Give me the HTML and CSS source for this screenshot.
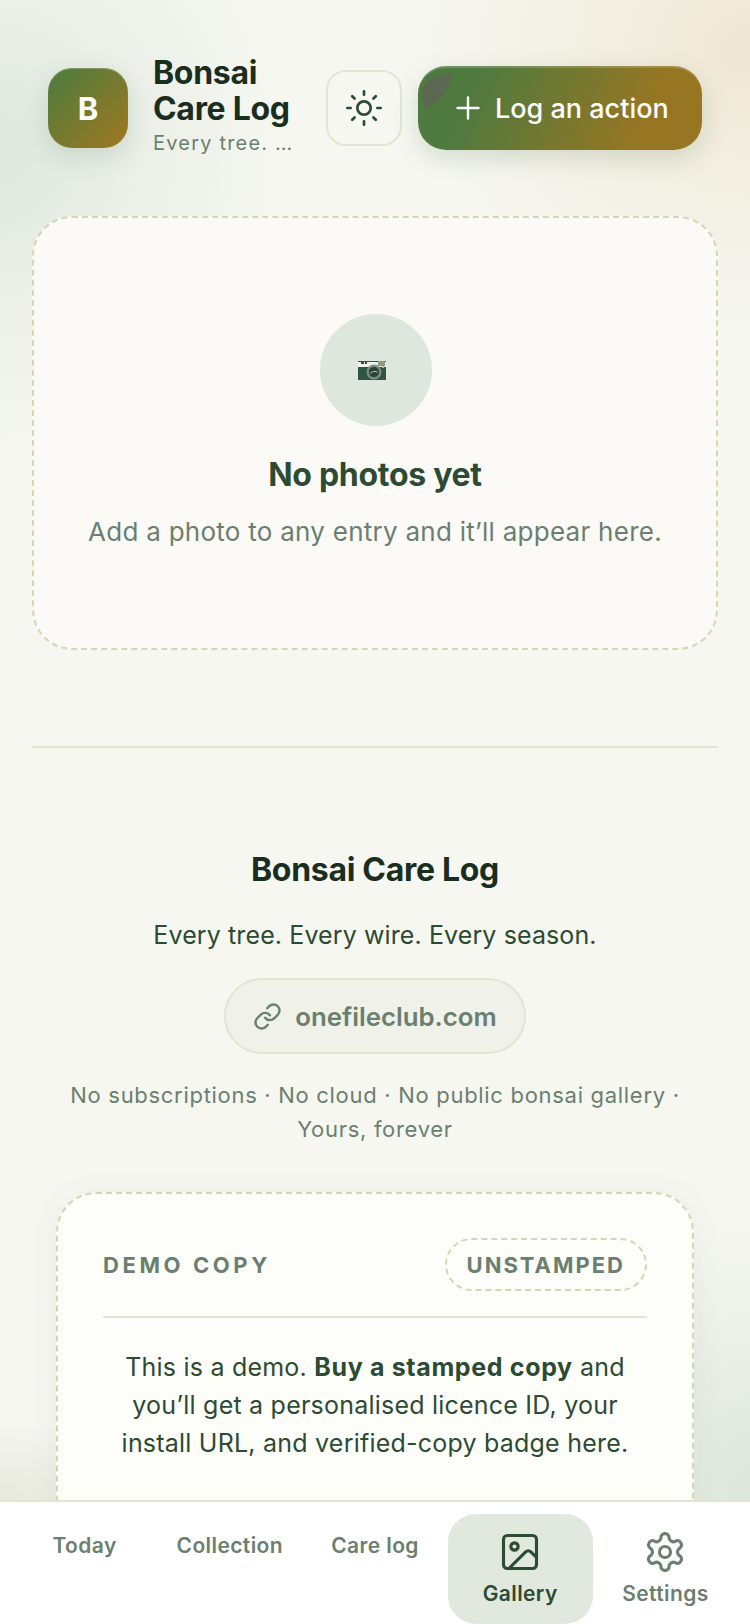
FILE: index.html
```html
<!DOCTYPE html>
<html lang="en">
<head>
  <meta charset="UTF-8" />
  <meta name="viewport" content="width=device-width, initial-scale=1.0" />
  <title>Bonsai Care Log</title>
  <link rel="stylesheet" href="styles.css">
</head>
<body>
  <main class="page">
    <header class="topbar">
      <div class="logo">B</div>
      <div class="brand">
        <h1 class="brand-name">Bonsai Care Log</h1>
        <p class="brand-tag">Every tree. Every wire. Every season.</p>
      </div>
      <button class="theme-btn" aria-label="Theme">
        <svg class="icon-sun" viewBox="0 0 24 24">
          <circle cx="12" cy="12" r="4"/>
          <path d="M12 2v2M12 20v2M4.93 4.93l1.41 1.41M17.66 17.66l1.41 1.41M2 12h2M20 12h2M6.34 17.66l-1.41 1.41M19.07 4.93l-1.41 1.41"/>
        </svg>
      </button>
      <button class="log-btn">
        <svg class="leaf" viewBox="0 0 32 36">
          <path d="M31 1C28 12 22 24 13 30C10 32 7 35 3 36C1 30 0 24 1 17C3 8 12 1 31 1Z"/>
        </svg>
        <svg class="icon-plus" viewBox="0 0 24 24"><path d="M5 12h14M12 5v14"/></svg>
        <span>Log an action</span>
      </button>
    </header>

    <section class="empty-card">
      <div class="empty-circle">
        <svg class="camera" viewBox="0 0 28 19">
          <rect x="0" y="0" width="28" height="19" fill="#2f5544"/>
          <rect x="0" y="1" width="28" height="5" fill="#eef1ec"/>
          <rect x="3" y="1" width="3" height="2" fill="#39453c"/>
          <rect x="7" y="1" width="2" height="2" fill="#39453c"/>
          <rect x="20" y="0" width="7" height="5" fill="#8c9a8e"/>
          <circle cx="16" cy="11" r="7.5" fill="#7b9185"/>
          <circle cx="16" cy="11" r="5.2" fill="#2c4436"/>
          <path d="M12.5 12c2-2 5-2 7-1" stroke="#a8b8ac" fill="none"/>
          <rect x="24" y="5" width="2" height="2" fill="#c9b765"/>
        </svg>
      </div>
      <h2 class="empty-title">No photos yet</h2>
      <p class="empty-text">Add a photo to any entry and it’ll appear here.</p>
    </section>

    <hr class="rule">

    <section class="about">
      <h3 class="about-name">Bonsai Care Log</h3>
      <p class="about-tag">Every tree. Every wire. Every season.</p>
      <a class="site-pill">
        <svg class="icon-link" viewBox="0 0 24 24">
          <path d="M10 13a5 5 0 0 0 7.54.54l3-3a5 5 0 0 0-7.07-7.07l-1.72 1.71"/>
          <path d="M14 11a5 5 0 0 0-7.54-.54l-3 3a5 5 0 0 0 7.07 7.07l1.71-1.71"/>
        </svg>
        onefileclub.com
      </a>
      <p class="about-note">No subscriptions · No cloud · No public bonsai gallery · Yours, forever</p>
    </section>

    <section class="demo-card">
      <div class="demo-head">
        <span class="demo-label">DEMO COPY</span>
        <span class="demo-badge">UNSTAMPED</span>
      </div>
      <p class="demo-text">This is a demo. <strong>Buy a stamped copy</strong> and you’ll get a personalised licence ID, your install URL, and verified-copy badge here.</p>
    </section>
  </main>

  <nav class="tabbar">
    <a class="tab">Today</a>
    <a class="tab">Collection</a>
    <a class="tab">Care log</a>
    <a class="tab tab-active">
      <svg class="tab-icon" viewBox="0 0 24 24">
        <rect x="3" y="3" width="18" height="18" rx="2"/>
        <circle cx="9" cy="9" r="2"/>
        <path d="M21 15l-3.086-3.086a2 2 0 0 0-2.828 0L6 21"/>
      </svg>
      Gallery
    </a>
    <a class="tab">
      <svg class="tab-icon" viewBox="0 0 24 24">
        <path d="M12.22 2h-.44a2 2 0 0 0-2 2v.18a2 2 0 0 1-1 1.73l-.43.25a2 2 0 0 1-2 0l-.15-.08a2 2 0 0 0-2.73.73l-.22.38a2 2 0 0 0 .73 2.73l.15.1a2 2 0 0 1 1 1.72v.51a2 2 0 0 1-1 1.74l-.15.09a2 2 0 0 0-.73 2.73l.22.38a2 2 0 0 0 2.73.73l.15-.08a2 2 0 0 1 2 0l.43.25a2 2 0 0 1 1 1.73V20a2 2 0 0 0 2 2h.44a2 2 0 0 0 2-2v-.18a2 2 0 0 1 1-1.73l.43-.25a2 2 0 0 1 2 0l.15.08a2 2 0 0 0 2.73-.73l.22-.39a2 2 0 0 0-.73-2.73l-.15-.08a2 2 0 0 1-1-1.74v-.5a2 2 0 0 1 1-1.74l.15-.09a2 2 0 0 0 .73-2.73l-.22-.38a2 2 0 0 0-2.73-.73l-.15.08a2 2 0 0 1-2 0l-.43-.25a2 2 0 0 1-1-1.73V4a2 2 0 0 0-2-2z"/>
        <circle cx="12" cy="12" r="3"/>
      </svg>
      Settings
    </a>
  </nav>
</body>
</html>
```

FILE: styles.css
```css
* {
  box-sizing: border-box;
}

html, body {
  height: 100%;
}

body {
  margin: 0;
  height: 100vh;
  display: flex;
  flex-direction: column;
  overflow: hidden;
  font-family: Inter, "Noto Sans", sans-serif;
  color: #2d4a32;
  background-color: #f6f7f1;
  background-image:
    radial-gradient(ellipse 280px 300px at 0 150px, #dfe8de, rgba(223, 232, 222, 0)),
    radial-gradient(ellipse 330px 280px at 750px 50px, #efe7d5, rgba(239, 231, 213, 0)),
    radial-gradient(ellipse 190px 280px at 750px 1500px, #dce6da, rgba(220, 230, 218, 0)),
    radial-gradient(ellipse 140px 90px at 0 1510px, #e4e7d9, rgba(228, 231, 217, 0));
}

svg {
  display: block;
  fill: none;
  stroke: currentColor;
  stroke-linecap: round;
  stroke-linejoin: round;
}

.page {
  flex: 1;
  min-height: 0;
  overflow: hidden;
  padding: 55px 32px 0;
}

/* header */
.topbar {
  display: flex;
  align-items: center;
  gap: 16px;
  padding: 0 16px;
  height: 106px;
}

.logo {
  flex: none;
  width: 80px;
  height: 80px;
  margin-right: 9px;
  border-radius: 24px;
  display: flex;
  align-items: center;
  justify-content: center;
  color: #fff;
  font-size: 31px;
  font-weight: 700;
  background: linear-gradient(135deg, #4a7c3f, #a07820);
  box-shadow: 0 8px 24px rgba(74, 110, 70, 0.18), inset 0 1px 1px rgba(255, 255, 255, 0.25);
}

.brand {
  flex: 1;
  min-width: 0;
  margin-top: -5px;
  padding-right: 16px;
}

.brand-name {
  margin: 0;
  font-size: 32px;
  line-height: 36px;
  font-weight: 700;
  letter-spacing: -0.3px;
  color: #1a2e1f;
}

.brand-tag {
  margin: 3px 0 0;
  font-size: 20px;
  line-height: 26px;
  letter-spacing: 1.2px;
  color: #6b7f6e;
  white-space: nowrap;
  overflow: hidden;
  text-overflow: ellipsis;
}

.theme-btn {
  flex: none;
  width: 76px;
  height: 76px;
  padding: 0;
  display: flex;
  align-items: center;
  justify-content: center;
  color: #2d4a32;
  background: transparent;
  border: 2px solid #e2e5cf;
  border-radius: 20px;
}

.icon-sun {
  width: 40px;
  height: 40px;
  stroke-width: 1.6;
}

.log-btn {
  position: relative;
  flex: none;
  width: 284px;
  height: 84px;
  display: flex;
  align-items: center;
  gap: 15px;
  padding: 0 0 0 38px;
  overflow: hidden;
  color: #fff;
  font: 500 27px Inter, sans-serif;
  background: linear-gradient(115deg, #4f7a3f 20%, #967622 78%);
  border: 0;
  border-radius: 28px;
  box-shadow: 0 8px 24px rgba(74, 110, 70, 0.2), inset 0 3px 1px -1px rgba(255, 255, 255, 0.18);
}

.leaf {
  position: absolute;
  left: 4px;
  top: 7px;
  width: 32px;
  height: 36px;
  stroke: none;
  fill: #5c6852;
}

.icon-plus {
  flex: none;
  width: 36px;
  height: 36px;
  margin: 0 -6px;
  stroke-width: 1.6;
}

/* empty state */
.empty-card {
  margin-top: 55px;
  height: 434px;
  padding-top: 96px;
  text-align: center;
  background-color: #fbfaf7;
  border: 2px dashed #d2d8b2;
  border-radius: 40px;
}

.empty-circle {
  width: 112px;
  height: 112px;
  margin-left: 286px;
  display: flex;
  align-items: center;
  justify-content: center;
  background-color: #dde7dd;
  border-radius: 50%;
}

.camera {
  width: 28px;
  height: 19px;
  margin-right: 9px;
  stroke: none;
}

.empty-title {
  margin: 28px 0 0;
  font-size: 32px;
  line-height: 42px;
  font-weight: 700;
  letter-spacing: -0.3px;
  color: #2d4a32;
}

.empty-text {
  margin: 18px 0 0;
  font-size: 26px;
  line-height: 36px;
  letter-spacing: 0.26px;
  color: #6b7f6e;
}

.rule {
  margin: 96px 0 0;
  height: 2px;
  border: 0;
  background-color: #e2e5cf;
}

/* about */
.about {
  text-align: center;
}

.about-name {
  margin: 102px 0 0;
  font-size: 32px;
  line-height: 40px;
  font-weight: 700;
  letter-spacing: -0.3px;
  color: #1a2e1f;
}

.about-tag {
  margin: 27px 0 0;
  font-size: 25px;
  line-height: 36px;
  letter-spacing: 0.11px;
}

.site-pill {
  width: 302px;
  height: 76px;
  margin: 25px auto 0;
  display: flex;
  align-items: center;
  justify-content: center;
  gap: 13px;
  font-size: 25.8px;
  font-weight: 600;
  color: #6b7f6e;
  background-color: #f0f1e9;
  border: 2px solid #e2e5cf;
  border-radius: 38px;
}

.icon-link {
  width: 29px;
  height: 29px;
  stroke-width: 2;
}

.about-note {
  margin: 24px 0 0;
  padding: 0 30px;
  font-size: 22px;
  line-height: 34px;
  letter-spacing: 0.7px;
  color: #6b7f6e;
}

/* demo card */
.demo-card {
  margin: 46px 24px 0;
  padding: 44px 45px;
  height: 420px;
  background-color: #fdfefa;
  border: 2px dashed #d2d8b2;
  border-radius: 40px;
  box-shadow: 0 4px 32px rgba(74, 90, 60, 0.07);
}

.demo-head {
  display: flex;
  align-items: center;
  justify-content: space-between;
  padding-bottom: 25px;
  border-bottom: 2px solid #e2e5cf;
}

.demo-label {
  font-size: 22px;
  font-weight: 700;
  letter-spacing: 3.6px;
  color: #6b7f6e;
}

.demo-badge {
  padding: 0 20px;
  height: 53px;
  display: flex;
  align-items: center;
  font-size: 22px;
  font-weight: 700;
  letter-spacing: 2px;
  color: #6b7f6e;
  border: 2px dashed #d2d8b2;
  border-radius: 27px;
}

.demo-text {
  margin: 30px 0 0;
  font-size: 25px;
  line-height: 38px;
  letter-spacing: 0.22px;
  text-align: center;
  color: #2d4a32;
}

.demo-text strong {
  font-weight: 700;
  letter-spacing: 0.65px;
}

/* bottom tabs */
.tabbar {
  flex: none;
  height: 124px;
  padding: 12px 12px 0;
  display: grid;
  grid-template-columns: repeat(5, 1fr);
  background-color: #fff;
  border-top: 2px solid #e2e5cf;
}

.tab {
  display: flex;
  flex-direction: column;
  align-items: center;
  padding-top: 18px;
  font-size: 21px;
  line-height: 28px;
  font-weight: 600;
  letter-spacing: 0.4px;
  color: #6b7f6e;
  border-radius: 28px;
}

.tab-icon {
  width: 44px;
  height: 44px;
  margin: -2px 0 6px;
  stroke-width: 1.7;
}

.tab-active {
  color: #2d4a32;
  background-color: #e1e9df;
}
```
